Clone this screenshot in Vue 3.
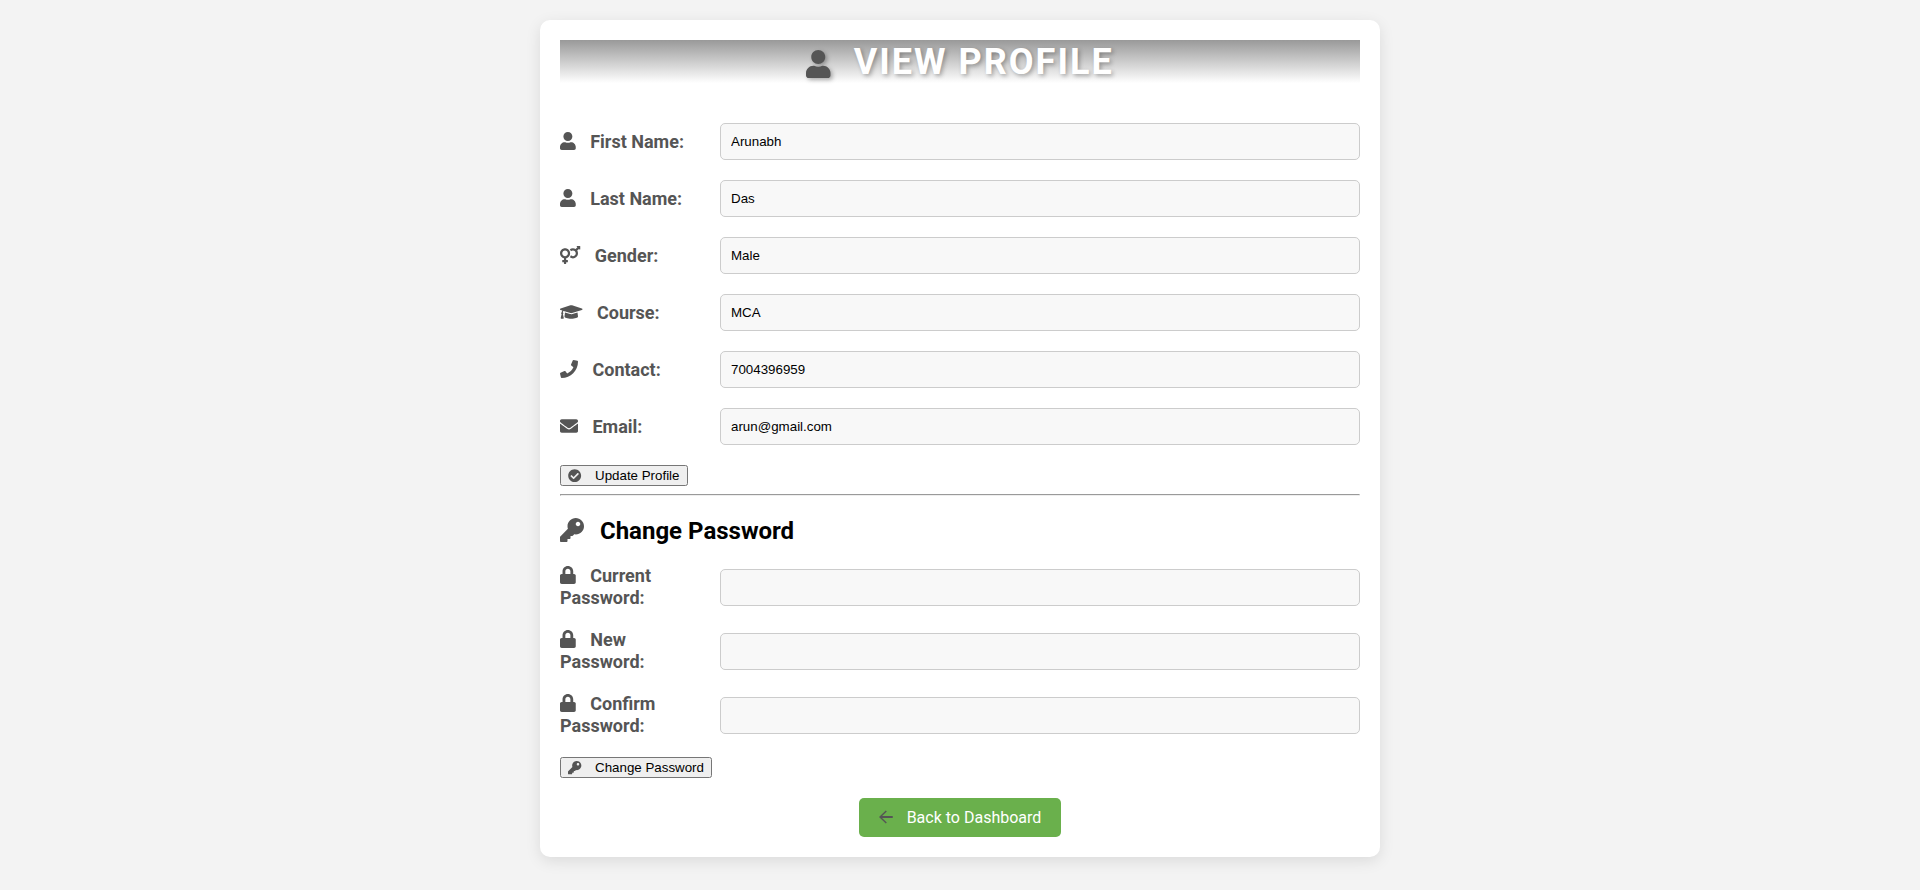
<script setup>
import { h, reactive } from 'vue'

const icons = {
  user: [448, 'M224 256c70.7 0 128-57.3 128-128S294.7 0 224 0 96 57.3 96 128s57.3 128 128 128zm89.6 32h-16.7c-22.2 10.2-46.9 16-72.9 16s-50.6-5.8-72.9-16h-16.7C60.2 288 0 348.2 0 422.4V464c0 26.5 21.5 48 48 48h352c26.5 0 48-21.5 48-48v-41.6c0-74.2-60.2-134.4-134.4-134.4z'],
  gender: [576, 'M564 0h-79c-10.7 0-16 12.9-8.5 20.5l16.9 16.9-48.7 48.7C422.5 72.1 396.2 64 368 64c-33.7 0-64.6 11.6-89.2 30.9 14 16.7 25 36 32.1 57.1 14.5-14.8 34.7-24 57.1-24 44.1 0 80 35.9 80 80s-35.9 80-80 80c-22.3 0-42.6-9.2-57.1-24-7.1 21.1-18 40.4-32.1 57.1 24.5 19.4 55.5 30.9 89.2 30.9 79.5 0 144-64.5 144-144 0-28.2-8.1-54.5-22.1-76.7l48.7-48.7 16.9 16.9c2.4 2.4 5.4 3.5 8.4 3.5 6.2 0 12.1-4.8 12.1-12V12c0-6.6-5.4-12-12-12zM144 64C64.5 64 0 128.5 0 208c0 68.5 47.9 125.9 112 140.4V400H76c-6.6 0-12 5.4-12 12v40c0 6.6 5.4 12 12 12h36v36c0 6.6 5.4 12 12 12h40c6.6 0 12-5.4 12-12v-36h36c6.6 0 12-5.4 12-12v-40c0-6.6-5.4-12-12-12h-36v-51.6c64.1-14.6 112-71.9 112-140.4 0-79.5-64.5-144-144-144zm0 224c-44.1 0-80-35.9-80-80s35.9-80 80-80 80 35.9 80 80-35.9 80-80 80z'],
  course: [640, 'M622.34 153.2L343.4 67.5c-15.2-4.67-31.6-4.67-46.79 0L17.66 153.2c-23.54 7.23-23.54 38.36 0 45.59l48.63 14.94c-10.67 13.19-17.23 29.28-17.88 46.9C38.78 266.15 32 276.11 32 288c0 10.78 5.68 19.85 13.86 25.65L20.33 428.53C18.11 438.52 25.71 448 35.94 448h56.11c10.24 0 17.84-9.48 15.62-19.47L82.14 313.65C90.32 307.85 96 298.78 96 288c0-11.57-6.47-21.25-15.66-26.87.76-15.02 8.44-28.3 20.69-36.72L296.6 284.5c9.06 2.78 26.44 6.25 46.79 0l278.95-85.7c23.55-7.24 23.55-38.36 0-45.6zM352.79 315.09c-28.53 8.76-52.84 3.92-65.59 0l-145.02-44.55L128 384c0 35.35 85.96 64 192 64s192-28.65 192-64l-14.18-113.47-145.03 44.56z'],
  phone: [512, 'M493.4 24.6l-104-24c-11.3-2.6-22.9 3.3-27.5 13.9l-48 112c-4.2 9.8-1.4 21.3 6.9 28l60.6 49.6c-36 76.7-98.9 140.5-177.2 177.2l-49.6-60.6c-6.8-8.3-18.2-11.1-28-6.9l-112 48C3.9 366.5-2 378.1.6 389.4l24 104C27.1 504.2 36.7 512 48 512c256.1 0 464-207.5 464-464 0-11.2-7.7-20.9-18.6-23.4z'],
  envelope: [512, 'M502.3 190.8c3.9-3.1 9.7-.2 9.7 4.7V400c0 26.5-21.5 48-48 48H48c-26.5 0-48-21.5-48-48V195.6c0-5 5.7-7.8 9.7-4.7 22.4 17.4 52.1 39.5 154.1 113.6 21.1 15.4 56.7 47.8 92.2 47.6 35.7.3 72-32.8 92.3-47.6 102-74.1 131.6-96.3 154-113.7zM256 320c23.2.4 56.6-29.2 73.4-41.4 132.7-96.3 142.8-104.7 173.4-128.7 5.8-4.5 9.2-11.5 9.2-18.9v-19c0-26.5-21.5-48-48-48H48c-26.5 0-48 21.5-48 48v19c0 7.4 3.4 14.3 9.2 18.9 30.6 23.9 40.7 32.4 173.4 128.7 16.8 12.2 50.2 41.8 73.4 41.4z'],
  check: [512, 'M504 256c0 136.967-111.033 248-248 248S8 392.967 8 256 119.033 8 256 8s248 111.033 248 248zM227.314 387.314l184-184c6.248-6.248 6.248-16.379 0-22.627l-22.627-22.627c-6.248-6.249-16.379-6.249-22.628 0L216 308.118l-70.059-70.059c-6.248-6.248-16.379-6.248-22.628 0l-22.627 22.627c-6.248 6.248-6.248 16.379 0 22.627l104 104c6.249 6.249 16.379 6.249 22.628.001z'],
  key: [512, 'M512 176.001C512 273.203 433.202 352 336 352c-11.22 0-22.19-1.062-32.827-3.069l-24.012 27.014A23.999 23.999 0 0 1 261.223 384H224v40c0 13.255-10.745 24-24 24h-40v40c0 13.255-10.745 24-24 24H24c-13.255 0-24-10.745-24-24v-78.059c0-6.365 2.529-12.47 7.029-16.971l161.802-161.802C163.108 213.814 160 195.271 160 176 160 78.798 238.797.001 335.999 0 433.488-.001 512 78.511 512 176.001zM336 128c0 26.51 21.49 48 48 48s48-21.49 48-48-21.49-48-48-48-48 21.49-48 48z'],
  lock: [448, 'M400 224h-24v-72C376 68.2 307.8 0 224 0S72 68.2 72 152v72H48c-26.5 0-48 21.5-48 48v192c0 26.5 21.5 48 48 48h352c26.5 0 48-21.5 48-48V272c0-26.5-21.5-48-48-48zm-104 0H152v-72c0-39.7 32.3-72 72-72s72 32.3 72 72v72z'],
  arrow: [448, 'M250 80L218 46L0 256L218 466L250 432L98 286H440V226H98z']
}

const Icon = (props) =>
  h('svg', { viewBox: `0 0 ${icons[props.name][0]} 512`, 'aria-hidden': 'true' }, [
    h('path', { d: icons[props.name][1], fill: 'currentColor' })
  ])
Icon.props = ['name']

const profile = reactive([
  { id: 'first-name', label: 'First Name:', icon: 'user', type: 'text', value: 'Arunabh' },
  { id: 'last-name', label: 'Last Name:', icon: 'user', type: 'text', value: 'Das' },
  { id: 'gender', label: 'Gender:', icon: 'gender', type: 'text', value: 'Male' },
  { id: 'course', label: 'Course:', icon: 'course', type: 'text', value: 'MCA' },
  { id: 'contact', label: 'Contact:', icon: 'phone', type: 'text', value: '7004396959' },
  { id: 'email', label: 'Email:', icon: 'envelope', type: 'email', value: 'arun@gmail.com' }
])

const passwords = reactive([
  { id: 'current-password', label: 'Current Password:', value: '' },
  { id: 'new-password', label: 'New Password:', value: '' },
  { id: 'confirm-password', label: 'Confirm Password:', value: '' }
])
</script>

<template>
  <main class="card">
    <h1 class="title"><Icon name="user" class="icon" /> VIEW PROFILE</h1>

    <form @submit.prevent>
      <div v-for="field in profile" :key="field.id" class="row">
        <label :for="field.id"><Icon :name="field.icon" class="icon" /> {{ field.label }}</label>
        <input :id="field.id" v-model="field.value" :type="field.type" />
      </div>
      <button type="submit" class="submit"><Icon name="check" class="icon" /> Update Profile</button>
    </form>

    <hr />

    <h2 class="subtitle"><Icon name="key" class="icon" /> Change Password</h2>
    <form @submit.prevent>
      <div v-for="field in passwords" :key="field.id" class="row">
        <label :for="field.id"><Icon name="lock" class="icon" /> {{ field.label }}</label>
        <input :id="field.id" v-model="field.value" type="password" autocomplete="off" />
      </div>
      <button type="submit" class="submit"><Icon name="key" class="icon" /> Change Password</button>
    </form>

    <a href="#" class="back"><Icon name="arrow" class="icon" /> Back to Dashboard</a>
  </main>
</template>

<style>
body {
  background: #f3f3f3;
}
</style>

<style scoped>
.card {
  box-sizing: border-box;
  display: flow-root;
  max-width: 840px;
  margin: 20px auto;
  padding: 20px;
  border-radius: 10px;
  background: #fff;
  box-shadow: 0 4px 15px rgba(0, 0, 0, 0.1);
  font-family: Roboto, "Liberation Sans", sans-serif;
}

.icon {
  height: 1em;
  margin-right: 10px;
  color: #555;
  vertical-align: -2px;
  overflow: visible;
}

.title {
  margin: 0 0 40px;
  padding-top: 1px;
  background: linear-gradient(#999, #fff);
  color: #fff;
  font-size: 36px;
  font-weight: 700;
  letter-spacing: 2px;
  line-height: 42px;
  text-align: center;
  text-shadow: 2px 2px 4px rgba(0, 0, 0, 0.3);
}

.title .icon {
  height: 28px;
  margin-right: 12px;
  vertical-align: -4px;
  filter: drop-shadow(2px 2px 2px rgba(0, 0, 0, 0.3));
}

.row {
  display: flex;
  align-items: center;
  margin-bottom: 20px;
}

label {
  box-sizing: border-box;
  flex: 0 0 20%;
  padding-right: 20px;
  color: #555;
  font-size: 18px;
  font-weight: 700;
  line-height: 22px;
}

input {
  box-sizing: border-box;
  flex: 1;
  min-width: 0;
  padding: 10px;
  border: 1px solid #ccc;
  border-radius: 5px;
  background: #f8f8f8;
  color: #000;
  font-family: "Liberation Sans", Arial, sans-serif;
}

.submit {
  display: block;
  font-family: "Liberation Sans", Arial, sans-serif;
}

hr {
  margin: 8px 0;
}

.subtitle {
  margin: 20px 0;
  padding-top: 1px;
  color: #000;
  font-size: 24px;
  font-weight: 700;
  line-height: 28px;
}

.subtitle .icon {
  vertical-align: -3px;
}

.back {
  display: block;
  width: fit-content;
  margin: 20px auto 0;
  padding: 10px 20px;
  border-radius: 5px;
  background: #6ab04c;
  color: #fff;
  font-size: 16px;
  line-height: 19px;
  text-decoration: none;
}
</style>
